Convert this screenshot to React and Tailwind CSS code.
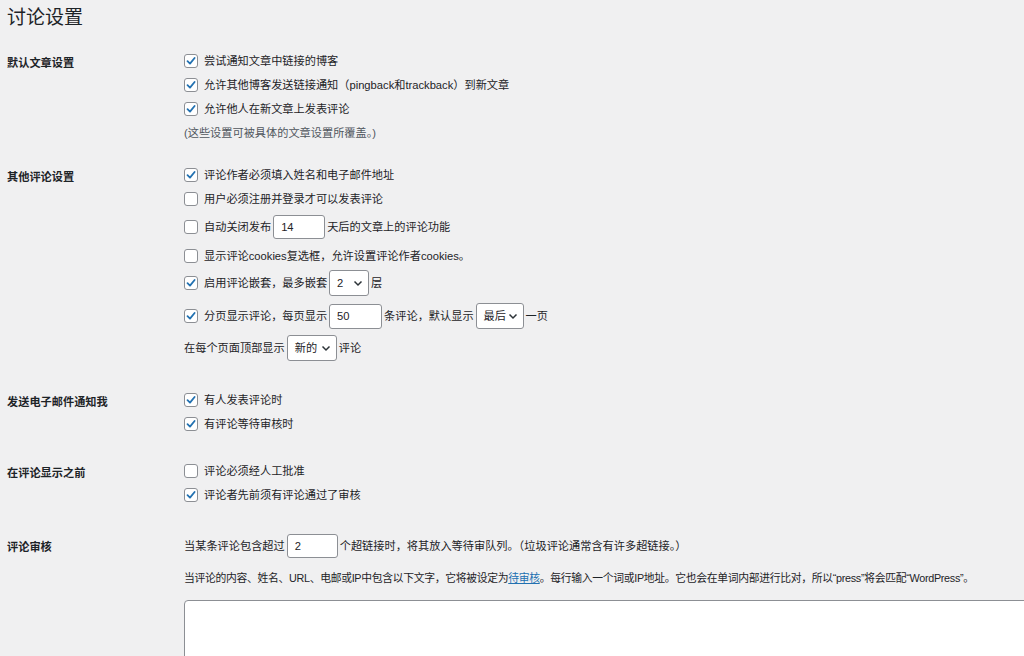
import React from "react";

const font = { fontFamily: '"Liberation Sans", "Noto Sans CJK SC", sans-serif' };

const Check = ({ checked }) => (
    <span className="w-[14px] h-[14px] shrink-0 rounded-[3px] border border-[#8c8f94] bg-white flex items-center justify-center mr-[6px]">
        {checked && (
            <svg width="12" height="12" viewBox="0 0 12 12">
                <path d="M2.5 6.2 L5 8.6 L9.6 3" fill="none" stroke="#2271b1" strokeWidth="1.8" strokeLinecap="round" strokeLinejoin="round" />
            </svg>
        )}
    </span>
);

const Sel = ({ value, w }) => (
    <span className={`inline-flex items-center justify-between h-[26px] ${w} mx-[2px] pl-[7px] pr-[5px] bg-white border border-[#8c8f94] rounded-[3px]`}>
        <span>{value}</span>
        <svg width="10" height="10" viewBox="0 0 10 10">
            <path d="M1.5 3.5 L5 7 L8.5 3.5" fill="none" stroke="#2c3338" strokeWidth="1.5" />
        </svg>
    </span>
);

const Inp = ({ value, w, h = "h-[24px]" }) => (
    <span className={`inline-flex items-center ${h} ${w} mx-[2px] px-[7px] bg-white border border-[#8c8f94] rounded-[3px]`}>
        {value}
    </span>
);

const Row = ({ h, check, children }) => (
    <div className={`flex items-center whitespace-nowrap ${h}`}>
        {check !== undefined && <Check checked={check} />}
        {children}
    </div>
);

const Section = ({ label, mt, children }) => (
    <div className={`flex ${mt}`}>
        <div className="w-[177px] shrink-0 font-bold text-[11.2px] pt-[6px]">{label}</div>
        <div className="flex-1 min-w-0">{children}</div>
    </div>
);

export default function App() {
    return (
        <div style={font} className="w-[1024px] h-[656px] overflow-hidden bg-[#f0f0f1] text-[#1d2327] text-[11.2px] pl-[7px]">
            <h1 className="h-[37px] flex items-center text-[19px] font-normal">讨论设置</h1>

            <Section label="默认文章设置" mt="mt-[12px]">
                <Row h="h-[24px]" check={true}>尝试通知文章中链接的博客</Row>
                <Row h="h-[24px]" check={true}>允许其他博客发送链接通知（pingback和trackback）到新文章</Row>
                <Row h="h-[24px]" check={true}>允许他人在新文章上发表评论</Row>
                <Row h="h-[24px]"><span className="text-[#50575e]">(这些设置可被具体的文章设置所覆盖。)</span></Row>
            </Section>

            <Section label="其他评论设置" mt="mt-[18px]">
                <Row h="h-[24px]" check={true}>评论作者必须填入姓名和电子邮件地址</Row>
                <Row h="h-[24px]" check={false}>用户必须注册并登录才可以发表评论</Row>
                <Row h="h-[32px]" check={false}>自动关闭发布<Inp value="14" w="w-[52px]" />天后的文章上的评论功能</Row>
                <Row h="h-[26px]" check={false}>显示评论cookies复选框，允许设置评论作者cookies。</Row>
                <Row h="h-[28px]" check={true}>启用评论嵌套，最多嵌套<Sel value="2" w="w-[40px]" />层</Row>
                <Row h="h-[38px]" check={true}>分页显示评论，每页显示<Inp value="50" w="w-[53px]" h="h-[25px]" />条评论，默认显示<Sel value="最后" w="w-[48px]" />一页</Row>
                <Row h="h-[26px]">在每个页面顶部显示<Sel value="新的" w="w-[50px]" />评论</Row>
            </Section>

            <Section label="发送电子邮件通知我" mt="mt-[27px]">
                <Row h="h-[24px]" check={true}>有人发表评论时</Row>
                <Row h="h-[24px]" check={true}>有评论等待审核时</Row>
            </Section>

            <Section label="在评论显示之前" mt="mt-[23px]">
                <Row h="h-[24px]" check={false}>评论必须经人工批准</Row>
                <Row h="h-[24px]" check={true}>评论者先前须有评论通过了审核</Row>
            </Section>

            <Section label="评论审核" mt="mt-[26px]">
                <Row h="h-[26px]">当某条评论包含超过<Inp value="2" w="w-[51px]" />个超链接时，将其放入等待审队列。（垃圾评论通常含有许多超链接。）</Row>
                <Row h="h-[32px]"><span className="mt-[6px] text-[10.8px] tracking-[-0.3px]">当评论的内容、姓名、URL、电邮或IP中包含以下文字，它将被设定为<span className="text-[#2271b1] underline">待审核</span>。每行输入一个词或IP地址。它也会在单词内部进行比对，所以“press”将会匹配“WordPress”。</span></Row>
                <div className="mt-[9px] h-[80px] bg-white border border-[#8c8f94] rounded-[4px] -mr-[10px]" />
            </Section>
        </div>
    );
}
